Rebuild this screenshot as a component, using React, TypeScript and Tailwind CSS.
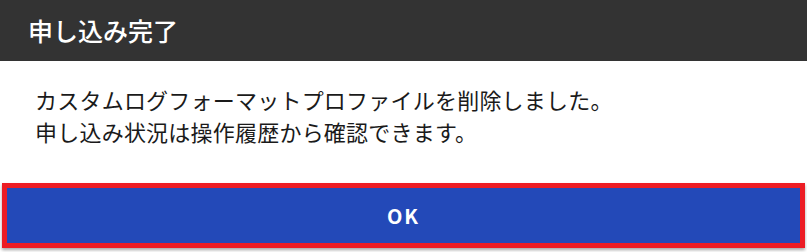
export default function App() {
    return (
        <div className="w-[807px] h-[252px] bg-white" style={{ fontFamily: '"Noto Sans CJK JP", "Noto Sans", sans-serif' }}>
            <div className="h-[61px] bg-[#333333] flex items-center pl-[28px]">
                <h1 className="text-[25px] font-medium text-white leading-none">申し込み完了</h1>
            </div>
            <div className="pt-[22px] pl-[35px] text-[22px] leading-[32px] text-[#1a1a1a] tracking-[0.01em]">
                <p>カスタムログフォーマットプロファイルを削除しました。</p>
                <p>申し込み状況は操作履歴から確認できます。</p>
            </div>
            <div className="pt-[36px] px-[2px]">
                <button className="w-full h-[65px] bg-[#2349b8] border-[5px] border-[#ec1c24] shadow-[0_2px_3px_rgba(0,0,0,0.35)] flex items-center justify-center">
                    <span className="text-white text-[20px] font-bold tracking-[0.1em] leading-none">OK</span>
                </button>
            </div>
        </div>
    );
}
